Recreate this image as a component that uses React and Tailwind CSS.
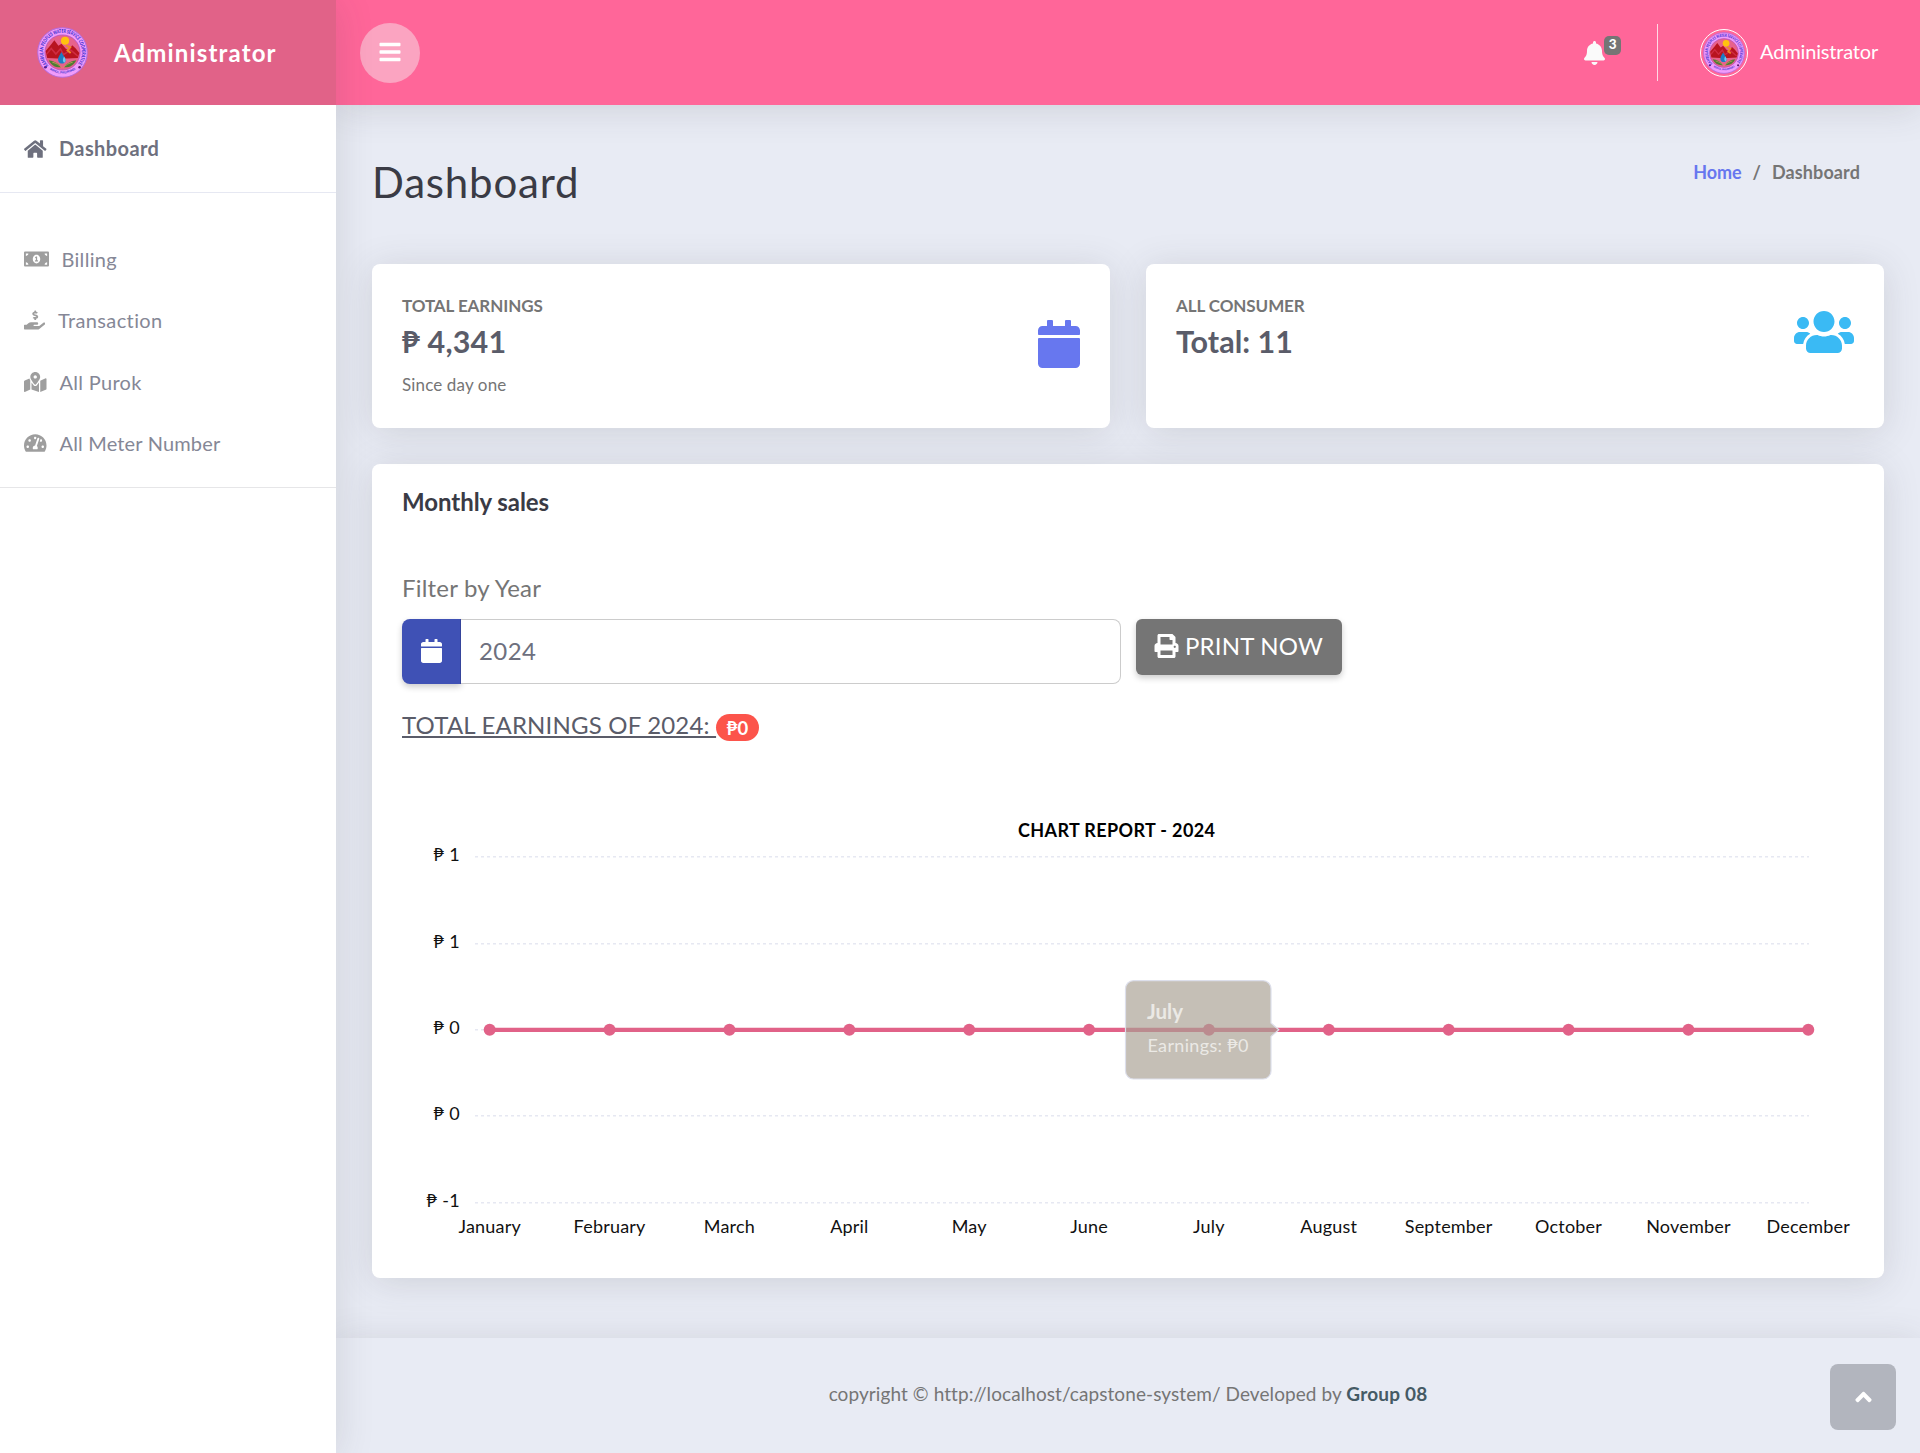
import React from "react";
import {
  FaAngleUp,
  FaBars,
  FaBell,
  FaCalendar,
  FaHandHoldingUsd,
  FaHome,
  FaMapMarkedAlt,
  FaMoneyBillAlt,
  FaPrint,
  FaTachometerAlt,
  FaUsers,
} from "react-icons/fa";

const SHADOW = "shadow-[0_4px_36px_0_rgba(58,59,69,0.15)]";

function Seal({ id, className }) {
  return (
    <svg viewBox="0 0 100 100" className={className} aria-hidden="true">
      <defs>
        <path id={id + "-top"} d="M22.5 75.5 A38 38 0 1 1 77.5 75.5" />
        <path id={id + "-bottom"} d="M21 80 A43 43 0 0 0 79 80" />
      </defs>
      <circle cx="50" cy="50" r="48.5" fill="#f09cfb" stroke="#b56ce0" strokeWidth="2" />
      <circle cx="50" cy="50" r="34.5" fill="#e8628c" stroke="#b052c4" strokeWidth="1.5" />
      <circle cx="55" cy="27" r="8" fill="#ffc20e" />
      <path d="M17 47 L28 34 L34 26 L42 37 L48 33 L56 42 L62 46 L69 36 L76 42 L83 51 L80 61 L60 62 L40 62 L20 61 Z" fill="#b8141f" />
      <path d="M19 53 L28 42 L37 53 L46 43 L52 54 L66 45 L80 57" fill="none" stroke="#cf2c42" strokeWidth="3" />
      <path d="M57 36 L65 40 L60 46 L66 51" fill="none" stroke="#f08a24" strokeWidth="4" />
      <path d="M48 49 C43 57 40 61 42 67 C44 73 54 73 56 67 C57 61 51 56 48 49Z" fill="#1c7cc4" />
      <path d="M53 58 C50 63 50 67 53 70 C58 68 56 62 53 58Z" fill="#72c8ee" />
      <path d="M23 65 C33 66 42 71 48 79 C36 80 28 75 23 65Z M77 65 C67 66 58 71 52 79 C64 80 72 75 77 65Z" fill="#4d7d34" />
      <path d="M30 69 C38 71 43 74 49 80 M70 69 C62 71 57 74 51 80" fill="none" stroke="#d9a05b" strokeWidth="1.5" />
      <circle cx="16.5" cy="79" r="2.5" fill="#5a1670" />
      <circle cx="83.5" cy="79" r="2.5" fill="#5a1670" />
      <g fontFamily="Lato, sans-serif" fontWeight="900" fill="#3a2ed0">
        <text fontSize="10">
          <textPath href={"#" + id + "-top"} textLength="172" lengthAdjust="spacingAndGlyphs">
            KAMBULAN PEOPLES WATER SERVICE COOPERATIVE
          </textPath>
        </text>
        <text fontSize="6">
          <textPath href={"#" + id + "-bottom"} startOffset="5" textLength="54" lengthAdjust="spacingAndGlyphs">
            BOHOL, PHILIPPINES
          </textPath>
        </text>
      </g>
    </svg>
  );
}

function Sidebar() {
  const item = "flex h-[61.4px] items-center pl-6 text-[20px] leading-6 text-[#858796]";
  return (
    <aside className={`relative z-20 w-[336px] shrink-0 bg-white ${SHADOW}`}>
      <div className="flex h-[105px] items-center bg-[#e16288] pl-[37px]">
        <Seal id="brand" className="size-[51px]" />
        <span className="ml-[26px] text-[24px] leading-8 font-bold tracking-[1.15px] text-white">Administrator</span>
      </div>
      <div className="flex h-[88px] items-center border-b border-[#e6e8f2] pl-6 text-[#6e707e]">
        <FaHome className="h-5 w-[22.5px]" />
        <span className="mb-px ml-[12.5px] text-[20px] leading-6 font-bold tracking-[0.4px]">Dashboard</span>
      </div>
      <nav className="border-b border-[#e6e6e8] pt-[35.4px] pb-[13px]">
        <a className={item}>
          <FaMoneyBillAlt className="h-5 w-[25px] text-[#9e9e9e]" />
          <span className="ml-[12.5px] tracking-[0.3px]">Billing</span>
        </a>
        <a className={item}>
          <FaHandHoldingUsd className="h-5 w-[21.3px] text-[#9e9e9e]" />
          <span className="ml-[12.7px] tracking-[0.38px]">Transaction</span>
        </a>
        <a className={item}>
          <FaMapMarkedAlt className="h-5 w-[22.5px] text-[#9e9e9e]" />
          <span className="ml-[13px] tracking-[0.3px]">All Purok</span>
        </a>
        <a className={item}>
          <FaTachometerAlt className="h-5 w-[22.5px] text-[#9e9e9e]" />
          <span className="ml-[13px] tracking-[0.17px]">All Meter Number</span>
        </a>
      </nav>
    </aside>
  );
}

function Topbar() {
  return (
    <header className={`relative z-10 flex h-[105px] items-center bg-[#ff6699] pr-[42px] pl-6 ${SHADOW}`}>
      <button className="flex size-[60px] items-center justify-center rounded-full bg-[#fba4c1] text-white">
        <FaBars className="mb-[2px] h-6 w-[22px]" />
      </button>
      <div className="ml-auto flex items-center">
        <div className="relative">
          <FaBell className="h-6 w-[21px] text-[#fafafa]" />
          <span className="absolute -top-[5px] left-5 flex h-[19px] w-[17px] items-center justify-center rounded-[5px] bg-[#757575] text-[13.5px] leading-none font-black text-white">
            3
          </span>
        </div>
        <div className="ml-[52px] h-[57px] w-px bg-[#ffd9e5]" />
        <div className="ml-[42px] size-12 rounded-full border border-white p-[2px]">
          <Seal id="user" className="size-full" />
        </div>
        <span className="mb-[3px] ml-3 text-[20px] leading-6 tracking-[-0.18px] text-white">Administrator</span>
      </div>
    </header>
  );
}

function StatCards() {
  const card = `flex h-[164px] items-start justify-between rounded-lg bg-white px-[30px] ${SHADOW}`;
  return (
    <div className="grid grid-cols-2 gap-9">
      <div className={card}>
        <div className="pt-[30px]">
          <div className="text-[17px] leading-6 font-bold tracking-[-0.08px] text-[#757575]">TOTAL EARNINGS</div>
          <div className="mt-[5px] text-[30.5px] leading-9 font-bold tracking-[0.2px] text-[#5a5c69]">₱ 4,341</div>
          <div className="mt-[14px] text-[17px] leading-6 tracking-[0.14px] text-[#757575]">Since day one</div>
        </div>
        <FaCalendar className="mt-14 h-12 w-[42px] text-[#6777ef]" />
      </div>
      <div className={card}>
        <div className="pt-[30px]">
          <div className="text-[17px] leading-6 font-bold tracking-[-0.08px] text-[#757575]">ALL CONSUMER</div>
          <div className="mt-[5px] text-[30.5px] leading-9 font-bold text-[#5a5c69]">Total: 11</div>
        </div>
        <FaUsers className="mt-11 h-12 w-[60px] text-[#3abaf4]" />
      </div>
    </div>
  );
}

const MONTHS = [
  "January", "February", "March", "April", "May", "June",
  "July", "August", "September", "October", "November", "December",
];
const TICKS = [
  ["₱ 1", 55.7],
  ["₱ 1", 142.7],
  ["₱ 0", 228.7],
  ["₱ 0", 314.8],
  ["₱ -1", 401.7],
];
const monthX = (i) => 87.7 + i * 119.87;

function Chart() {
  return (
    <svg width="1452" height="447" viewBox="0 0 1452 447" className="mt-[60px] block" fontFamily="Lato, sans-serif" fontSize="18">
      <text x="714.5" y="36" textAnchor="middle" fontWeight="700" textLength="197">CHART REPORT - 2024</text>
      {TICKS.map(([label, y], i) => (
        <g key={i}>
          <line x1="73" x2="1407" y1={y} y2={y} stroke="#e6e8f2" strokeWidth="1.6" strokeDasharray="3 3" />
          <text x="58" y={y + 4.3} textAnchor="end" letterSpacing="0.3" fill="#111">{label}</text>
        </g>
      ))}
      <line x1={monthX(0)} x2={monthX(11)} y1="228.8" y2="228.8" stroke="#e16288" strokeWidth="4.2" />
      {MONTHS.map((m, i) => (
        <g key={m}>
          <circle cx={monthX(i)} cy="228.8" r="6" fill="#e16288" />
          <text x={monthX(i)} y="432" textAnchor="middle" letterSpacing="0.2" fill="#111">{m}</text>
        </g>
      ))}
      <path
        d="M731.5 179.7 H861 a8 8 0 0 1 8 8 V222 L876.8 228.8 L869 235.6 V270 a8 8 0 0 1 -8 8 H731.5 a8 8 0 0 1 -8 -8 V187.7 a8 8 0 0 1 8 -8 Z"
        fill="rgb(168,159,146)"
        fillOpacity="0.67"
        stroke="#dddfeb"
        strokeWidth="1.2"
      />
      <g fill="#fff" fillOpacity="0.67">
        <text x="745" y="218" fontSize="20.5" fontWeight="700">July</text>
        <text x="745.5" y="251" textLength="101">Earnings: ₱0</text>
      </g>
    </svg>
  );
}

function SalesCard() {
  return (
    <section className={`mt-9 rounded-lg bg-white px-[30px] pt-[23px] pb-[30px] ${SHADOW}`}>
      <h2 className="text-[24px] leading-[30px] font-bold tracking-[-0.06px] text-[#3a3b45]">Monthly sales</h2>
      <label className="mt-14 block text-[24px] leading-[30px] tracking-[0.2px] text-[#757575]">Filter by Year</label>
      <div className="mt-4 flex items-start gap-[15px]">
        <div className="flex h-[65px] w-[719px]">
          <div className="flex w-[59px] items-center justify-center rounded-l-lg border-r border-[#35449b] bg-[#3f51b5] text-white shadow-[0_3px_6px_rgba(0,0,0,0.2)]">
            <FaCalendar className="mb-px h-6 w-[21px]" />
          </div>
          <div className="flex flex-1 items-center rounded-r-lg border border-l-0 border-[#cccccc] bg-white pb-[2px] pl-[18px] text-[24px] leading-[30px] tracking-[0.4px] text-[#6e707e]">
            2024
          </div>
        </div>
        <button className="flex h-14 w-[206px] items-center rounded-[6px] bg-[#757575] pl-[18px] text-[24px] leading-[30px] text-white shadow-[0_3px_6px_rgba(0,0,0,0.2)]">
          <FaPrint className="mb-[2px] h-6 w-[25px]" />
          <span className="mb-[2px] ml-[6px] tracking-[0.2px]">PRINT NOW</span>
        </button>
      </div>
      <div className="mt-[26px] flex h-[31px] text-[#5a5c69]">
        <span className="w-[314px] text-[24px] leading-[30px] tracking-[0.18px] whitespace-pre underline decoration-2 underline-offset-2 [text-decoration-skip-ink:none]">
          {"TOTAL EARNINGS OF 2024: "}
        </span>
        <span className="mt-[4px] flex h-[27px] w-[43px] items-center justify-center rounded-full bg-[#fc544b] text-[18.5px] leading-6 font-bold text-white">
          ₱0
        </span>
      </div>
      <Chart />
    </section>
  );
}

export default function App() {
  return (
    <div className="relative flex h-[1453px] w-[1920px] overflow-hidden bg-[#e8ebf4] [font-family:Lato,sans-serif]">
      <Sidebar />
      <div className="flex flex-1 flex-col">
        <Topbar />
        <main className="px-9">
          <div className="flex h-[159px] items-start justify-between">
            <h1 className="mt-[53px] text-[42px] leading-[48px] tracking-[0.8px] text-[#3a3b45]">Dashboard</h1>
            <div className="mt-[55px] mr-6 flex text-[18px] leading-6 font-bold text-[#757575]">
              <a className="tracking-[-0.1px] text-[#6777ef]">Home</a>
              <span className="mx-[11px]">/</span>
              <span className="tracking-[0.11px]">Dashboard</span>
            </div>
          </div>
          <StatCards />
          <SalesCard />
        </main>
        <footer className={`mt-[60px] flex-1 bg-[#e8ebf4] pt-[44px] text-center text-[19px] leading-6 text-[#757575] ${SHADOW}`}>
          <span className="tracking-[0.08px]">copyright © http://localhost/capstone-system/ Developed by </span>
          <b className="font-bold tracking-[0.18px] text-[#455a64]">Group 08</b>
        </footer>
      </div>
      <button className="absolute right-6 bottom-[23px] z-30 flex size-[66px] items-center justify-center rounded-lg bg-[#b2b5be] text-white">
        <FaAngleUp className="h-[26px] w-[17px]" />
      </button>
    </div>
  );
}
